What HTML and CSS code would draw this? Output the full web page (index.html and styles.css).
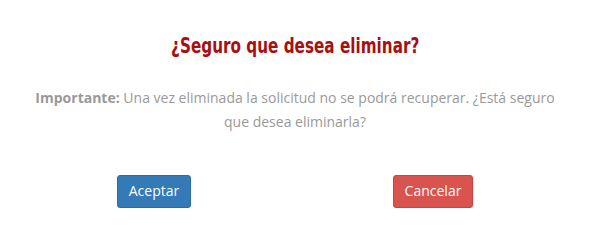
FILE: index.html
```html
<!DOCTYPE html>
<html lang="es">
<head>
<meta charset="utf-8">
<link rel="stylesheet" href="styles.css">
</head>
<body>
<div class="dialog">
  <h2 class="title"><span class="title-text">¿Seguro que desea eliminar?</span></h2>
  <p class="message"><strong>Importante:</strong> Una vez eliminada la solicitud no se podrá recuperar. ¿Está seguro que desea eliminarla?</p>
  <div class="actions">
    <div class="col"><button class="btn btn-primary">Aceptar</button></div>
    <div class="col"><button class="btn btn-danger">Cancelar</button></div>
  </div>
</div>
</body>
</html>
```
FILE: styles.css
```css
html, body {
  margin: 0;
  padding: 0;
  background: #ffffff;
}
.dialog {
  width: 558px;
  margin: 0 auto;
  padding-top: 30px;
  text-align: center;
}
.title {
  margin: 0;
  font-family: "DejaVu Sans Condensed", "DejaVu Sans", sans-serif;
  font-weight: bold;
  font-size: 22px;
  line-height: 31px;
  color: #a80f10;
}
.title-text {
  display: inline-block;
  transform: scaleX(0.77);
}
.message {
  margin: 25px auto 0;
  width: 530px;
  font-family: "Open Sans", sans-serif;
  font-size: 14px;
  line-height: 24px;
  color: #999999;
}
.message strong {
  font-weight: 700;
}
.actions {
  display: grid;
  grid-template-columns: 1fr 1fr;
  margin-top: 41px;
}
.col {
  display: flex;
  justify-content: center;
}
.btn {
  font-family: "Open Sans", sans-serif;
  font-size: 14px;
  line-height: 20px;
  padding: 5px 11px 6px;
  border-radius: 3px;
  border: 1px solid transparent;
  color: #ffffff;
}
.btn-primary {
  background: #337ab7;
  border-color: #2e6da4;
  margin-right: 3px;
}
.btn-danger {
  background: #d9534f;
  border-color: #d43f3a;
  margin-right: 3px;
}
```
